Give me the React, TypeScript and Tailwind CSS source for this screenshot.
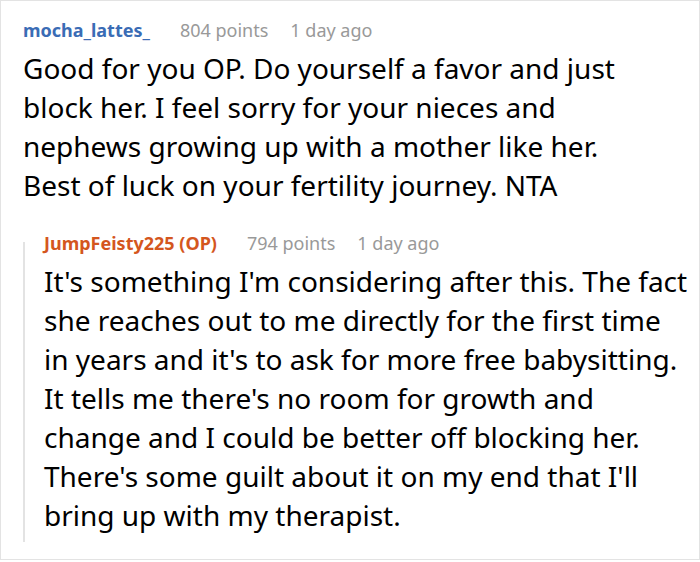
const font = { fontFamily: '"Noto Sans", "Open Sans", sans-serif' };

function Meta({ name, points, time, color }: { name: string; points: string; time: string; color: string }) {
  return (
    <div className="flex items-baseline text-[18px] leading-[24px]">
      <span className={`font-bold ${color}`}>{name}</span>
      <span className="ml-[30px] text-[#999999]">{points}</span>
      <span className="ml-[22px] text-[#999999]">{time}</span>
    </div>
  );
}

function Body({ lines }: { lines: string[] }) {
  return (
    <p className="mt-[7px] whitespace-nowrap text-[28px] leading-[39px] text-black">
      {lines.map((line, i) => (
        <span key={i} className="block">
          {line}
        </span>
      ))}
    </p>
  );
}

export default function App() {
  return (
    <div style={font} className="h-[562px] w-[700px] bg-white">
      <div className="h-[560px] w-[700px] border border-[#e3e3e3] pl-[22px] pt-[17px]">
        <Meta name="mocha_lattes_" points="804 points" time="1 day ago" color="text-[#3a6cb5]" />
        <Body
          lines={[
            "Good for you OP. Do yourself a favor and just",
            "block her. I feel sorry for your nieces and",
            "nephews growing up with a mother like her.",
            "Best of luck on your fertility journey. NTA",
          ]}
        />
        <div className="mt-[26px] flex">
          <div className="mt-[11px] mb-[-7px] w-[2px] shrink-0 bg-[#e3e3e3]" />
          <div className="pl-[19px]">
            <Meta name="JumpFeisty225 (OP)" points="794 points" time="1 day ago" color="text-[#d4561e]" />
            <Body
              lines={[
                "It's something I'm considering after this. The fact",
                "she reaches out to me directly for the first time",
                "in years and it's to ask for more free babysitting.",
                "It tells me there's no room for growth and",
                "change and I could be better off blocking her.",
                "There's some guilt about it on my end that I'll",
                "bring up with my therapist.",
              ]}
            />
          </div>
        </div>
      </div>
    </div>
  );
}
